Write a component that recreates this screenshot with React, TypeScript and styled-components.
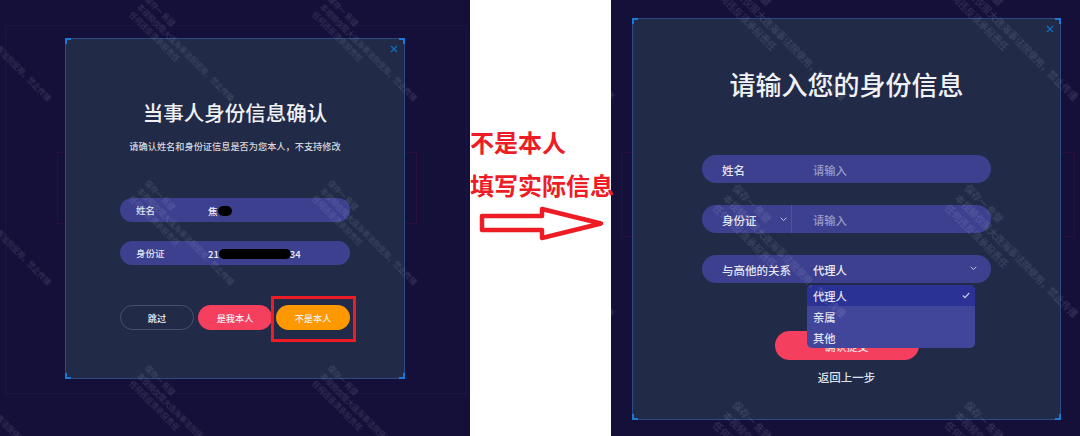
import { createGlobalStyle } from 'styled-components'
import styled from 'styled-components'

const GlobalStyle = createGlobalStyle`
  html, body {
    margin: 0;
    padding: 0;
    background: #fff;
  }
  body {
    font-family: "Noto Sans CJK SC", "Liberation Sans", sans-serif;
  }
`

const wmLines = ['保存一 焦健', '本视频仅限大连海事法院使用，禁止传播', '任何违反须承担责任']

const grid = (xs: number[], ys: number[]) =>
  xs.flatMap((x) => ys.map((y) => ({ x, y })))

const marksLeft = grid([-32, 151, 334], [-7, 177, 362])
const marksRight = grid([-103, 129, 361], [-36, 181, 398])

const Watermarks = ({ marks, $big }: { marks: { x: number; y: number }[]; $big?: boolean }) => (
  <>
    {marks.map((m) => (
      <Mark key={`${m.x}-${m.y}`} $big={$big} style={{ left: m.x, top: m.y }}>
        {wmLines.map((l) => (
          <div key={l}>{l}</div>
        ))}
      </Mark>
    ))}
  </>
)

const Chevron = () => (
  <svg width="7" height="5" viewBox="0 0 7 5" fill="none">
    <path d="M.7.8l2.8 2.8L6.3.8" stroke="#c6c8e4" strokeWidth="1" />
  </svg>
)

const Check = () => (
  <svg width="8" height="7" viewBox="0 0 8 7" fill="none">
    <path d="M.8 3.5l2.2 2.2L7.2 1" stroke="#c6c8e4" strokeWidth="1.2" />
  </svg>
)

const CloseIcon = () => (
  <svg width="8" height="8" viewBox="0 0 8 8" fill="none">
    <path d="M1 1l6 6M7 1L1 7" stroke="#0f6fc0" strokeWidth="1.2" />
  </svg>
)

export default function App() {
  return (
    <>
      <GlobalStyle />
      <Page>
        <DarkPanel $width={470}>
          <OuterFrame />
          <GlowFrame $left={57} $width={358} $height={70} />
          <ConfirmModal>
            <Corners />
            <CloseBtn>
              <CloseIcon />
            </CloseBtn>
            <Title $size={20.5}>当事人身份信息确认</Title>
            <Subtitle>请确认姓名和身份证信息是否为您本人，不支持修改</Subtitle>
            <InfoList>
              <InfoPill>
                <InfoLabel>姓名</InfoLabel>
                <InfoValue>
                  焦<Blot $width={14} />
                </InfoValue>
              </InfoPill>
              <InfoPill>
                <InfoLabel>身份证</InfoLabel>
                <InfoValue>
                  21
                  <Blot $width={72} />
                  <CutDigits>34</CutDigits>
                </InfoValue>
              </InfoPill>
            </InfoList>
            <ButtonRow>
              <ActionButton $variant="ghost">跳过</ActionButton>
              <ActionButton $variant="red">是我本人</ActionButton>
              <Highlighted>
                <ActionButton $variant="orange">不是本人</ActionButton>
              </Highlighted>
            </ButtonRow>
          </ConfirmModal>
          <Watermarks marks={marksLeft} />
        </DarkPanel>

        <Middle>
          <Note>不是本人</Note>
          <Note>填写实际信息</Note>
          <ArrowWrap>
            <svg width="126" height="40" viewBox="0 0 126 40" fill="none">
              <path
                d="M3 12H63V5L122 19.5 63 34V26H3Z"
                fill="#fff"
                stroke="#ee1c25"
                strokeWidth="4.5"
                strokeLinejoin="round"
              />
            </svg>
          </ArrowWrap>
        </Middle>

        <DarkPanel $width={469}>
          <GlowFrame $left={10} $width={452} $height={83} />
          <FormModal>
            <Corners />
            <CloseBtn>
              <CloseIcon />
            </CloseBtn>
            <Title $size={26}>请输入您的身份信息</Title>
            <FormList>
              <FormPill>
                <FormLabel>姓名</FormLabel>
                <Placeholder>请输入</Placeholder>
              </FormPill>
              <FormPill>
                <FormLabel>身份证</FormLabel>
                <IdChevron>
                  <Chevron />
                </IdChevron>
                <Placeholder>请输入</Placeholder>
              </FormPill>
              <SelectWrap>
                <FormPill>
                  <FormLabel>与高他的关系</FormLabel>
                  <Selected>代理人</Selected>
                  <SelectChevron>
                    <Chevron />
                  </SelectChevron>
                </FormPill>
                <Dropdown>
                  <Option $active>
                    代理人
                    <Check />
                  </Option>
                  <Option>亲属</Option>
                  <Option>其他</Option>
                </Dropdown>
              </SelectWrap>
            </FormList>
            <SubmitButton>确认提交</SubmitButton>
            <BackLink>返回上一步</BackLink>
          </FormModal>
          <Watermarks marks={marksRight} $big />
        </DarkPanel>
      </Page>
    </>
  )
}

const Page = styled.div`
  width: 1080px;
  height: 436px;
  display: flex;
  overflow: hidden;
`

const DarkPanel = styled.div<{ $width: number }>`
  position: relative;
  width: ${(p) => p.$width}px;
  height: 436px;
  flex: none;
  overflow: hidden;
  background: #15103a;
`

const OuterFrame = styled.div`
  position: absolute;
  left: 5px;
  top: 25px;
  width: 460px;
  height: 367px;
  border: 1px solid rgba(80, 90, 170, 0.09);
`

const GlowFrame = styled.div<{ $left: number; $width: number; $height: number }>`
  position: absolute;
  left: ${(p) => p.$left}px;
  top: 152px;
  width: ${(p) => p.$width}px;
  height: ${(p) => p.$height}px;
  border: 1px solid rgba(150, 20, 70, 0.16);
`

const Mark = styled.div<{ $big?: boolean }>`
  position: absolute;
  z-index: 3;
  font-size: ${(p) => (p.$big ? 9.4 : 7.4)}px;
  font-weight: 500;
  line-height: ${(p) => (p.$big ? 14 : 11)}px;
  color: rgba(255, 255, 255, 0.13);
  white-space: nowrap;
  transform: rotate(45deg);
  transform-origin: 0 0;
  pointer-events: none;
  filter: blur(0.4px);
`

const Modal = styled.div`
  position: relative;
  box-sizing: border-box;
  background: #212a47;
  border: 1px solid #2b4a86;
  display: flex;
  flex-direction: column;
  align-items: center;
`

const ConfirmModal = styled(Modal)`
  width: 340px;
  height: 341px;
  margin: 38px 0 0 65px;
  padding-top: 58px;
`

const FormModal = styled(Modal)`
  width: 429px;
  height: 402px;
  margin: 18px 0 0 21px;
  padding-top: 50px;
`

const Corners = styled.div`
  position: absolute;
  inset: -1px;
  pointer-events: none;
  background:
    linear-gradient(#1a78d8, #1a78d8) left top / 6px 2px no-repeat,
    linear-gradient(#1a78d8, #1a78d8) left top / 2px 6px no-repeat,
    linear-gradient(#1a78d8, #1a78d8) right top / 6px 2px no-repeat,
    linear-gradient(#1a78d8, #1a78d8) right top / 2px 6px no-repeat,
    linear-gradient(#1a78d8, #1a78d8) left bottom / 6px 2px no-repeat,
    linear-gradient(#1a78d8, #1a78d8) left bottom / 2px 6px no-repeat,
    linear-gradient(#1a78d8, #1a78d8) right bottom / 6px 2px no-repeat,
    linear-gradient(#1a78d8, #1a78d8) right bottom / 2px 6px no-repeat;
`

const CloseBtn = styled.span`
  position: absolute;
  top: 6px;
  right: 6px;
  display: flex;
`

const Title = styled.div<{ $size: number }>`
  font-size: ${(p) => p.$size}px;
  font-weight: 500;
  line-height: 30px;
  color: #f0f1f4;
`

const Subtitle = styled.div`
  margin-top: 12px;
  font-size: 9.2px;
  font-weight: 500;
  line-height: 14px;
  color: #d6d8de;
`

const InfoList = styled.div`
  margin-top: 45px;
  display: flex;
  flex-direction: column;
  gap: 19px;
`

const InfoPill = styled.div`
  width: 230px;
  height: 24px;
  box-sizing: border-box;
  padding-left: 16px;
  border-radius: 12px;
  background: #3c408f;
  display: flex;
  align-items: center;
`

const InfoLabel = styled.span`
  width: 72px;
  font-size: 9.5px;
  font-weight: 500;
  color: #e2e3ee;
`

const InfoValue = styled.span`
  display: flex;
  align-items: center;
  margin-top: 2px;
  font-size: 9.5px;
  font-weight: 500;
  color: #f0f0f6;
`

const Blot = styled.i<{ $width: number }>`
  width: ${(p) => p.$width}px;
  height: 10px;
  border-radius: 5px;
  background: #000;
`

const CutDigits = styled.span`
  margin-left: -1px;
`

const ButtonRow = styled.div`
  margin-top: 40px;
  width: 230px;
  display: flex;
  gap: 4px;
`

const ActionButton = styled.div<{ $variant: 'ghost' | 'red' | 'orange' }>`
  width: 74px;
  height: 25px;
  box-sizing: border-box;
  border-radius: 13px;
  font-size: 9.2px;
  font-weight: 500;
  color: #eef0f4;
  display: flex;
  align-items: center;
  justify-content: center;
  border: ${(p) => (p.$variant === 'ghost' ? '1px solid #47506e' : 'none')};
  background: ${(p) =>
    p.$variant === 'red' ? '#f43f5e' : p.$variant === 'orange' ? '#fe9800' : 'transparent'};
`

const Highlighted = styled.div`
  position: relative;
  &::after {
    content: '';
    position: absolute;
    left: -5px;
    top: -9px;
    width: 79px;
    height: 40px;
    border: 3px solid #ee1c25;
  }
`

const Middle = styled.div`
  position: relative;
  z-index: 2;
  width: 141px;
  flex: none;
  background: #fff;
  display: flex;
  flex-direction: column;
  padding-top: 120px;
  box-sizing: border-box;
`

const Note = styled.div`
  font-size: 24px;
  line-height: 43px;
  height: 43px;
  font-weight: 700;
  color: #ee1c25;
  white-space: nowrap;
`

const ArrowWrap = styled.div`
  margin: -2px 0 0 9px;
  display: flex;
`

const FormList = styled.div`
  position: relative;
  z-index: 2;
  margin-top: 56px;
  width: 289px;
  display: flex;
  flex-direction: column;
  gap: 22px;
`

const FormPill = styled.div`
  position: relative;
  width: 289px;
  height: 28px;
  box-sizing: border-box;
  padding: 2px 0 0 20px;
  border-radius: 14px;
  background: #3c408f;
  display: flex;
  align-items: center;
`

const FormLabel = styled.span`
  width: 91px;
  font-size: 11.5px;
  font-weight: 500;
  color: #e3e4f0;
  white-space: nowrap;
`

const Placeholder = styled.span`
  font-size: 11.3px;
  font-weight: 500;
  color: #9a9cc6;
`

const Selected = styled.span`
  font-size: 11.3px;
  font-weight: 500;
  color: #eceef6;
`

const IdChevron = styled.span`
  position: absolute;
  left: 78px;
  top: 0;
  width: 11px;
  height: 28px;
  display: flex;
  align-items: center;
  border-right: 1px solid #4c51a4;
`

const SelectChevron = styled.span`
  position: absolute;
  right: 14px;
  top: 11px;
  display: flex;
`

const SelectWrap = styled.div`
  position: relative;
`

const Dropdown = styled.div`
  position: absolute;
  left: 105px;
  top: 30px;
  width: 168px;
  border-radius: 5px;
  overflow: hidden;
  background: #41469b;
`

const Option = styled.div<{ $active?: boolean }>`
  height: 21px;
  box-sizing: border-box;
  padding: 0 5px 0 6px;
  font-size: 11.3px;
  font-weight: 500;
  color: #dfe0f0;
  display: flex;
  align-items: center;
  justify-content: space-between;
  background: ${(p) => (p.$active ? '#2b3296' : 'transparent')};
`

const SubmitButton = styled.div`
  margin-top: 48px;
  width: 144px;
  height: 29px;
  border-radius: 15px;
  background: #f43f5e;
  color: #eef0f4;
  font-size: 11px;
  display: flex;
  align-items: center;
  justify-content: center;
`

const BackLink = styled.div`
  margin-top: 9px;
  font-size: 11.5px;
  font-weight: 500;
  line-height: 16px;
  color: #dfe1e8;
`
